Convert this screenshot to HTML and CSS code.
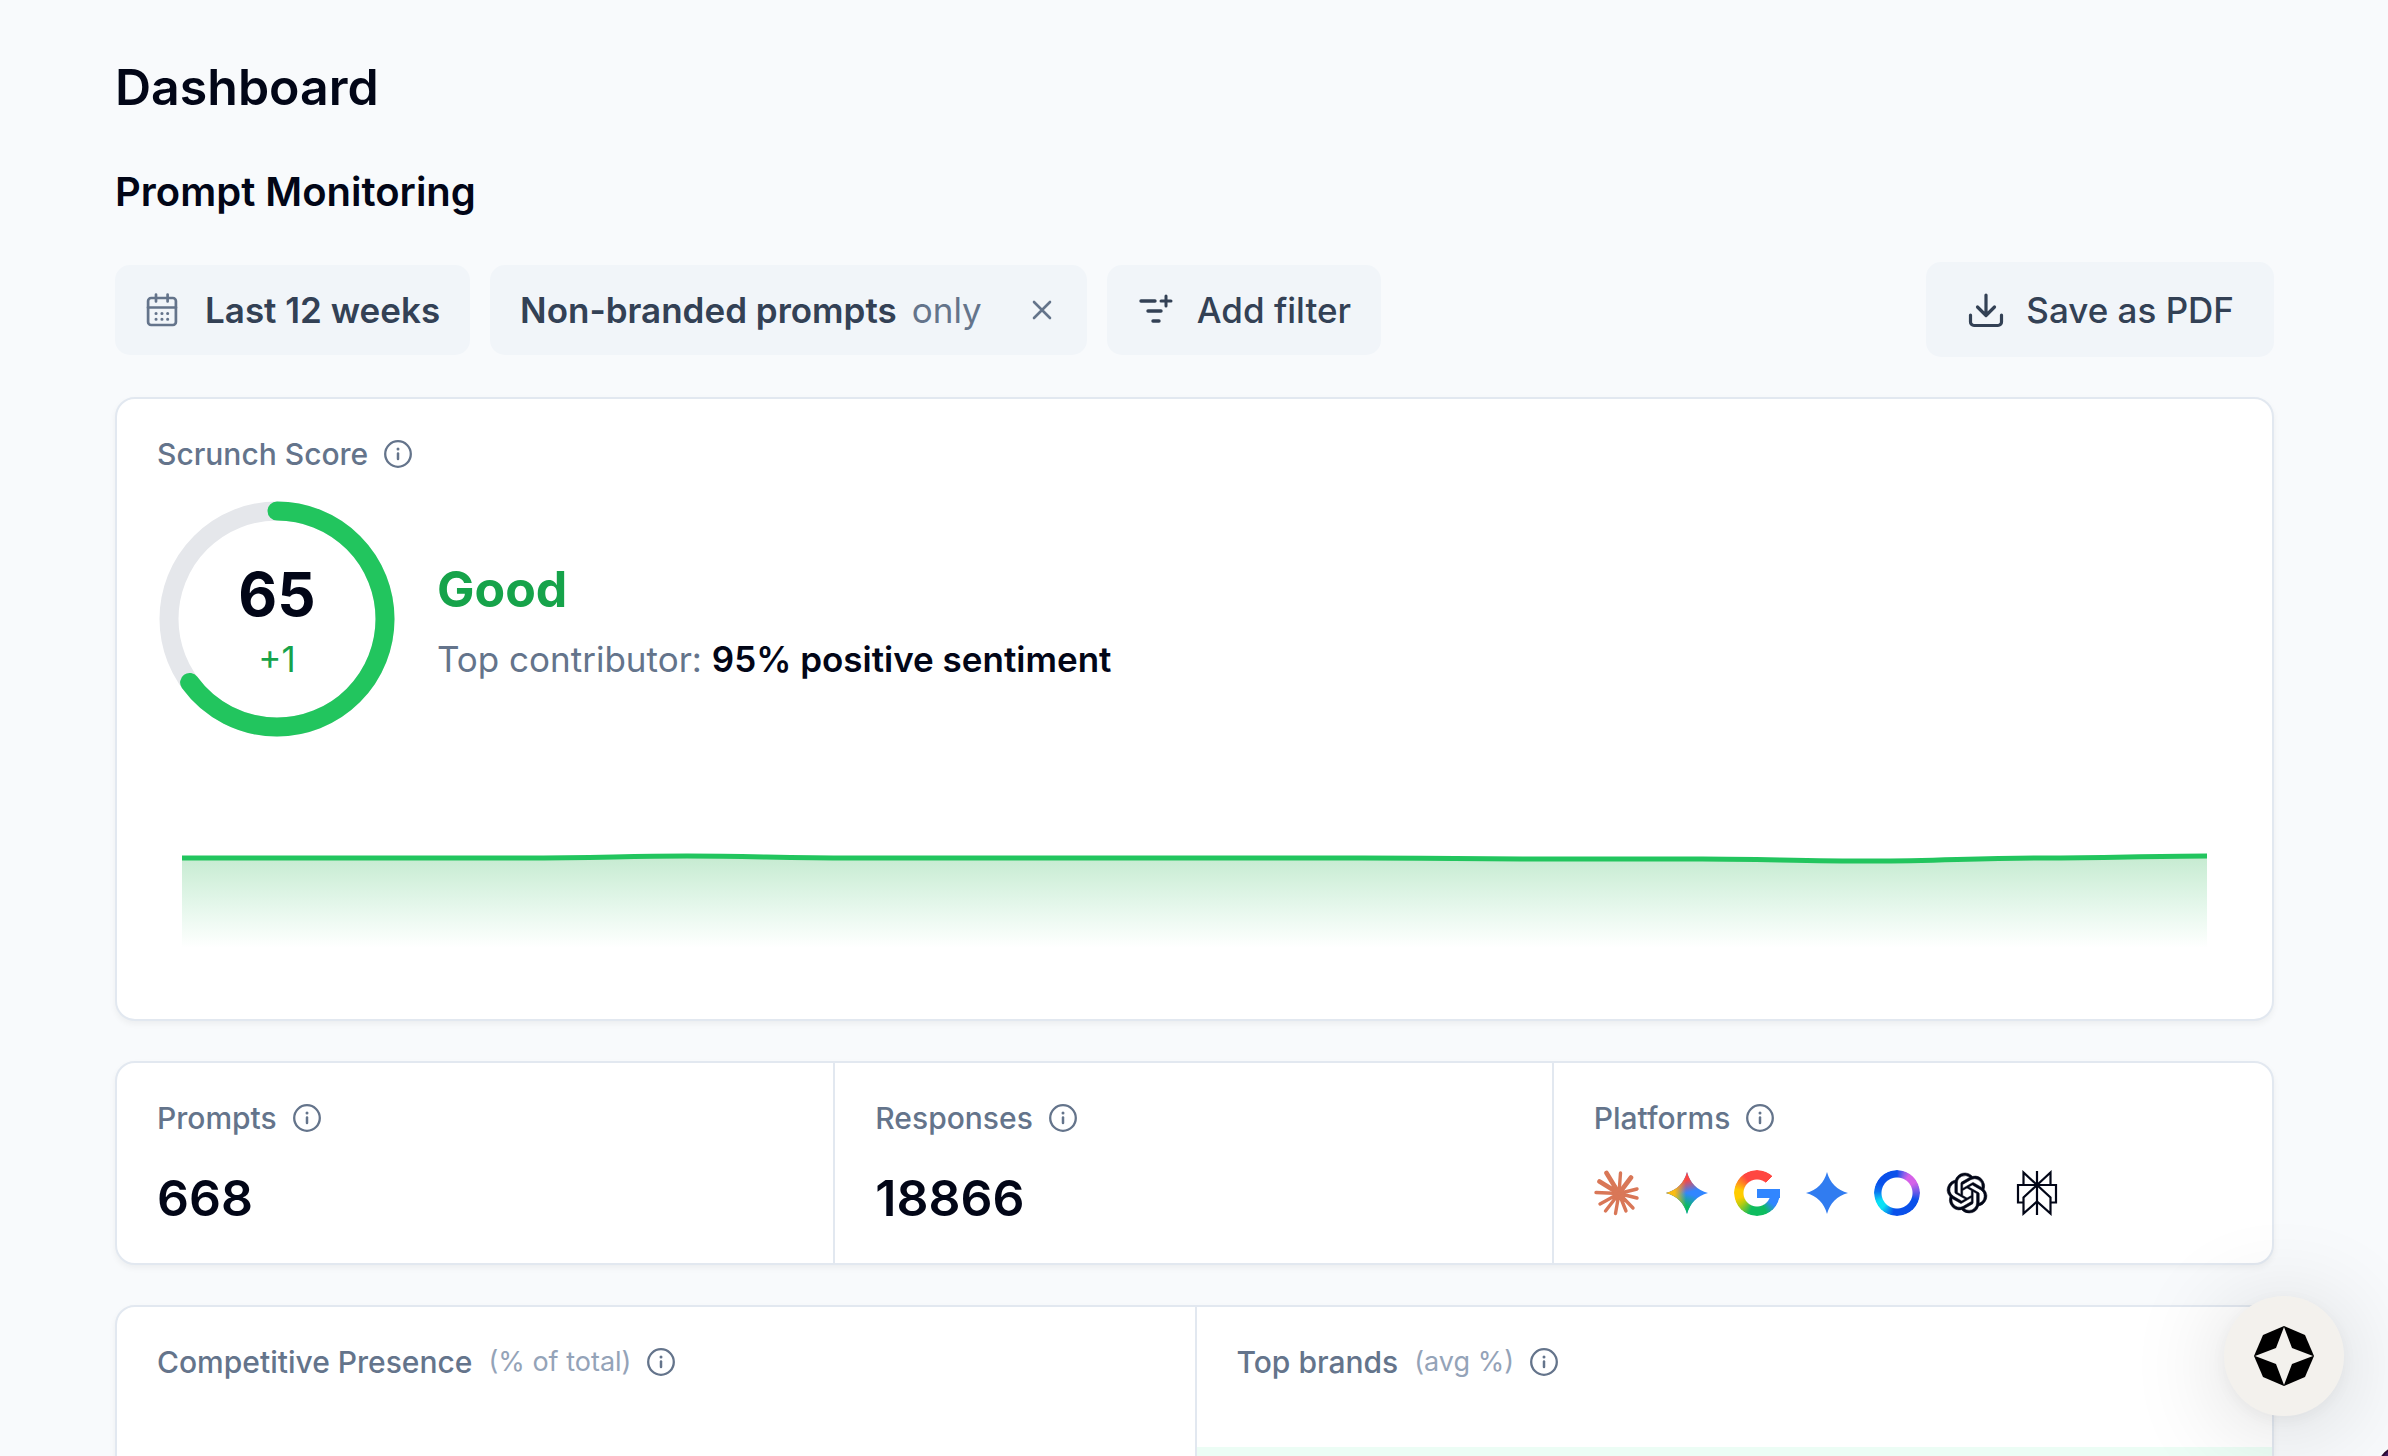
FILE: index.html
```html
<!DOCTYPE html>
<html lang="en">
<head>
<meta charset="UTF-8">
<meta name="viewport" content="width=device-width, initial-scale=1.0">
<title>Dashboard</title>
<link rel="stylesheet" href="styles.css">
</head>
<body>
  <!-- shared icons -->
  <svg class="defs" aria-hidden="true">
    <symbol id="info" viewBox="0 0 28 28">
      <circle cx="14" cy="14" r="12.8" fill="none" stroke="currentColor" stroke-width="2.3"/>
      <circle cx="14" cy="9" r="1.5" fill="currentColor"/>
      <path d="M14 13.6v5.4" stroke="currentColor" stroke-width="2.5" stroke-linecap="round"/>
    </symbol>
    <symbol id="spark" viewBox="0 0 46 46">
      <path d="M23 2C26 13 33 20 44 23C33 26 26 33 23 44C20 33 13 26 2 23C13 20 20 13 23 2Z"/>
    </symbol>
  </svg>

  <main class="page">
    <h1>Dashboard</h1>
    <h2>Prompt Monitoring</h2>

    <div class="toolbar">
      <button type="button" class="chip chip-date">
        <svg class="icon-calendar" viewBox="0 0 34 34" fill="none" stroke="currentColor" stroke-width="2.7" stroke-linecap="round">
          <rect x="3.1" y="5" width="27.8" height="27" rx="3"/>
          <path d="M3 14.5h28M11 1.5v7M22.6 1.5v7"/>
          <path d="M11 20.5h.1M16.9 20.5h.1M22.6 20.5h.1M11 26.2h.1M16.9 26.2h.1M22.6 26.2h.1" stroke-width="3"/>
        </svg>
        <span class="strong">Last 12 weeks</span>
      </button>
      <div class="chip">
        <span class="strong">Non-branded prompts</span>
        <span class="only">only</span>
        <button type="button" class="remove" aria-label="Remove filter">
          <svg viewBox="0 0 20 20" fill="none" stroke="currentColor" stroke-width="2.6" stroke-linecap="round"><path d="M2 2l16 16M18 2L2 18"/></svg>
        </button>
      </div>
      <button type="button" class="chip chip-add">
        <svg class="icon-filter" viewBox="0 0 36 32" fill="none" stroke="currentColor" stroke-width="3.4" stroke-linecap="round">
          <path d="M4 7h14M11 17h13M16 27h6"/>
          <path d="M24 7h10M29 2v10" stroke-width="3"/>
        </svg>
        <span>Add filter</span>
      </button>
      <button type="button" class="save">
        <svg class="icon-save" viewBox="0 0 36 36" fill="none" stroke="currentColor" stroke-width="3.2" stroke-linecap="round" stroke-linejoin="round">
          <path d="M20 3v20M11.5 15l8.5 8.5 8.500-8.500M4.500 23v7a3.500 3.500 0 0 0 3.500 3.500h24a3.500 3.500 0 0 0 3.500-3.500V23"/>
        </svg>
        <span>Save as PDF</span>
      </button>
    </div>

    <section class="card score">
      <h3 class="label">Scrunch Score <svg class="info"><use href="#info"/></svg></h3>
      <div class="score-row">
        <div class="gauge">
          <svg viewBox="0 0 236 236" fill="none" stroke-width="19">
            <circle cx="118" cy="118" r="108" stroke="#e5e7eb"/>
            <circle cx="118" cy="118" r="108" stroke="#22c55e" stroke-linecap="round" pathLength="100" stroke-dasharray="65 100" transform="rotate(-90 118 118)"/>
          </svg>
          <div class="gauge-text">
            <strong>65</strong>
            <span>+1</span>
          </div>
        </div>
        <div class="verdict">
          <p class="rating">Good</p>
          <p class="contributor">Top contributor: <b>95% positive sentiment</b></p>
        </div>
      </div>
      <svg class="trend" viewBox="0 0 2025 100" preserveAspectRatio="none">
        <defs>
          <linearGradient id="fade" x1="0" y1="0" x2="0" y2="1">
            <stop offset="0" stop-color="#22b04c" stop-opacity=".26"/>
            <stop offset="1" stop-color="#22c55e" stop-opacity="0"/>
          </linearGradient>
        </defs>
        <path fill="url(#fade)" d="M0 8H340C420 8 440 6 505 6S600 8 670 8H1180C1240 8 1260 10 1340 10H1520C1580 10 1620 11 1690 11S1790 8 1860 8S1960 6 2025 6V98H0Z"/>
        <path fill="none" stroke="#22c55e" stroke-width="5" d="M0 8H340C420 8 440 6 505 6S600 8 670 8H1180C1240 8 1260 9 1340 9H1520C1580 9 1620 11 1690 11S1790 8 1860 8S1960 6 2025 6"/>
      </svg>
    </section>

    <section class="card stats">
      <div class="cell">
        <h3 class="label">Prompts <svg class="info"><use href="#info"/></svg></h3>
        <p class="value">668</p>
      </div>
      <div class="cell">
        <h3 class="label">Responses <svg class="info"><use href="#info"/></svg></h3>
        <p class="value">18866</p>
      </div>
      <div class="cell">
        <h3 class="label">Platforms <svg class="info"><use href="#info"/></svg></h3>
        <div class="platforms">
          <svg viewBox="0 0 46 46" role="img" aria-label="Claude" fill="none" stroke="#d97757" stroke-width="3.4" stroke-linecap="round">
            <path d="M25 23.5L26.5 3M25 23.5L43 19M25 23.5L43 28M25 23.5L39 38M25 23.5L32 41M25 23.5L21.5 43.500M25 23.500L11.500 41M25 23.500L6 34M25 23.500L2 22.500"/>
            <path d="M25 23.500L12.500 3M25 23.500L37 7.500M25 23.500L5.500 11.500" stroke-width="4.600"/>
            <circle cx="25" cy="23.500" r="4" fill="#d97757"/>
          </svg>
          <svg viewBox="0 0 46 46" role="img" aria-label="Gemini">
            <defs>
              <linearGradient id="gem-red" x1="20" y1="2" x2="26" y2="22" gradientUnits="userSpaceOnUse"><stop offset=".4" stop-color="#f94543"/><stop offset="1" stop-color="#f94543" stop-opacity="0"/></linearGradient>
              <linearGradient id="gem-yellow" x1="3" y1="23" x2="22" y2="23" gradientUnits="userSpaceOnUse"><stop offset=".4" stop-color="#fabc12"/><stop offset="1" stop-color="#fabc12" stop-opacity="0"/></linearGradient>
              <linearGradient id="gem-green" x1="19" y1="44" x2="26" y2="24" gradientUnits="userSpaceOnUse"><stop offset=".4" stop-color="#08b962"/><stop offset="1" stop-color="#08b962" stop-opacity="0"/></linearGradient>
            </defs>
            <use href="#spark" fill="#3186ff"/>
            <use href="#spark" fill="url(#gem-green)"/>
            <use href="#spark" fill="url(#gem-red)"/>
            <use href="#spark" fill="url(#gem-yellow)"/>
          </svg>
          <div class="google" role="img" aria-label="Google"></div>
          <svg viewBox="0 0 46 46" role="img" aria-label="Gemini"><use href="#spark" fill="#317cf0"/></svg>
          <div class="meta" role="img" aria-label="Meta AI"></div>
          <svg viewBox="-1.8 -1.8 27.6 27.6" role="img" aria-label="ChatGPT"><path fill="#020617" stroke="#020617" stroke-width=".3" d="M22.282 9.821a5.985 5.985 0 0 0-.516-4.910 6.046 6.046 0 0 0-6.510-2.900A6.065 6.065 0 0 0 4.981 4.182a5.985 5.985 0 0 0-3.998 2.900 6.046 6.046 0 0 0 .743 7.097 5.980 5.980 0 0 0 .510 4.911 6.051 6.051 0 0 0 6.515 2.900A5.985 5.985 0 0 0 13.260 24a6.056 6.056 0 0 0 5.772-4.206 5.990 5.990 0 0 0 3.997-2.900 6.056 6.056 0 0 0-.747-7.073zM13.260 22.430a4.476 4.476 0 0 1-2.876-1.040l.141-.081 4.779-2.758a.795.795 0 0 0 .392-.681v-6.737l2.020 1.168a.071.071 0 0 1 .038.052v5.583a4.504 4.504 0 0 1-4.494 4.494zM3.600 18.304a4.470 4.470 0 0 1-.535-3.014l.142.085 4.783 2.759a.771.771 0 0 0 .780 0l5.843-3.369v2.332a.080.080 0 0 1-.033.062L9.740 19.950a4.500 4.500 0 0 1-6.140-1.646zM2.340 7.896a4.485 4.485 0 0 1 2.366-1.973V11.600a.766.766 0 0 0 .388.676l5.815 3.355-2.020 1.168a.076.076 0 0 1-.071 0l-4.830-2.786A4.504 4.504 0 0 1 2.340 7.872zm16.597 3.855l-5.833-3.387L15.119 7.200a.076.076 0 0 1 .071 0l4.830 2.791a4.494 4.494 0 0 1-.676 8.105v-5.678a.790.790 0 0 0-.407-.667zm2.010-3.023l-.141-.085-4.774-2.782a.776.776 0 0 0-.785 0L9.409 9.230V6.897a.066.066 0 0 1 .028-.061l4.830-2.787a4.500 4.500 0 0 1 6.680 4.660zm-12.640 4.135l-2.020-1.164a.080.080 0 0 1-.038-.057V6.075a4.500 4.500 0 0 1 7.375-3.453l-.142.080L8.704 5.460a.795.795 0 0 0-.393.681zm1.097-2.365l2.602-1.500 2.607 1.500v2.999l-2.597 1.500-2.607-1.500z"/></svg>
          <svg viewBox="0 0 46 46" role="img" aria-label="Perplexity" fill="none" stroke="#020617" stroke-width="2.2"><path d="M23 1V45M9.500 15V2.500L23 15 36.500 2.500V15M9.500 32.500H4V15H42V32.500H36.500M23 15L9.500 27.500V43.500L23 31.500 36.500 43.500V27.500Z"/></svg>
        </div>
      </div>
    </section>

    <section class="card split">
      <div class="cell">
        <h3 class="label">Competitive Presence <small>(% of total)</small> <svg class="info"><use href="#info"/></svg></h3>
      </div>
      <div class="cell">
        <h3 class="label">Top brands <small>(avg %)</small> <svg class="info"><use href="#info"/></svg></h3>
        <div class="brand-row"></div>
      </div>
    </section>
  </main>

  <button type="button" class="assistant" aria-label="Open assistant">
    <svg viewBox="0 0 60 60"><path d="M30 0L51 9 60 30 51 51 30 60 9 51 0 30 9 9Z"/><path fill="#f3f1ed" d="M30 1L38 22 59 30 38 38 30 59 22 38 1 30 22 22Z"/></svg>
  </button>
  <div class="corner"></div>
</body>
</html>
```
FILE: styles.css
```css
* { box-sizing: border-box; }
body { margin: 0; height: 100vh; overflow: hidden; background: #f8fafc; color: #020617; font-family: Inter, sans-serif; font-size: 35px; font-optical-sizing: none; }
h1, h2, h3, p { margin: 0; }
button { font: inherit; color: inherit; border: 0; background: none; padding: 0; cursor: pointer; }
.defs { display: none; }
.page { padding: 55px 114px 0 115px; }
h1 { font-size: 50px; font-weight: 600; line-height: 64px; }
h2 { margin-top: 45px; font-size: 40px; font-weight: 600; line-height: 56px; }

.toolbar { display: flex; align-items: center; gap: 20px; margin-top: 42px; color: #334155; font-weight: 500; }
.chip { display: flex; align-items: center; height: 90px; padding: 0 30px; border-radius: 15px; background: #f1f5f9; }
.chip .strong { font-weight: 600; }
.icon-calendar { width: 34px; height: 34px; margin-right: 26px; color: #64748b; }
.only { margin-left: 15px; color: #64748b; font-weight: 400; }
.remove { display: flex; margin: 0 5px 0 50px; color: #64748b; }
.remove svg { width: 20px; height: 20px; }
.icon-filter { width: 36px; height: 32px; margin-right: 24px; }
.save { display: flex; align-items: center; gap: 24px; height: 95px; margin-left: auto; padding: 0 40px; border-radius: 15px; background: #f1f5f9; }
.icon-save { width: 36px; height: 36px; overflow: visible; }

.card { margin-top: 40px; border: 2px solid #e2e8f0; border-radius: 20px; background: #fff; box-shadow: 0 3px 6px rgba(0, 0, 0, .05); }
.label { display: flex; align-items: center; color: #64748b; font-size: 30px; font-weight: 500; line-height: 40px; }
.label small { margin-left: 16px; color: #94a3b8; font-size: 27px; font-weight: 400; }
.info { width: 28px; height: 28px; margin-left: 16px; }
.score { height: 624px; padding: 35px 40px; }
.score-row { display: flex; align-items: center; gap: 42px; margin-top: 27px; padding-left: 2px; }
.gauge { display: grid; width: 236px; height: 236px; }
.gauge > * { grid-area: 1 / 1; }
.gauge-text { display: flex; flex-direction: column; align-items: center; justify-content: center; padding-top: 10px; }
.gauge-text strong { font-size: 60px; font-weight: 700; line-height: 70px; }
.gauge-text span { color: #16a34a; line-height: 60px; }
.verdict { padding-top: 10px; }
.rating { color: #16a34a; font-size: 50px; font-weight: 700; line-height: 70px; }
.contributor { color: #64748b; line-height: 70px; }
.contributor b { color: #020617; font-weight: 600; }
.trend { display: block; width: calc(100% - 50px); height: 100px; margin: 113px 25px 0; }

.cell { padding: 35px 40px; }
.stats { display: grid; grid-template-columns: repeat(3, 1fr); }
.stats .cell { padding-bottom: 30px; border-right: 2px solid #e2e8f0; }
.stats .cell:last-child { border-right: 0; }
.value { margin-top: 25px; font-size: 50px; font-weight: 600; line-height: 70px; }
.platforms { display: flex; gap: 24px; margin-top: 32px; }
.platforms > * { width: 46px; height: 46px; }

/* ring plus crossbar */
.google { display: grid; align-items: center; justify-items: end; }
.google::before, .google::after { content: ""; grid-area: 1 / 1; }
.google::before { width: 46px; height: 46px; border-radius: 50%; background: conic-gradient(#ff4641 42deg, transparent 42deg 88deg, #3186ff 88deg 125deg, #0ebc5f 155deg 200deg, #b8cc10 235deg, #ffcc00 255deg 280deg, #ff4641 325deg); -webkit-mask: radial-gradient(circle, transparent 13px, #000 14px); mask: radial-gradient(circle, transparent 13px, #000 14px); }
.google::after { width: 23px; height: 9px; background: #3186ff; }
.meta { border-radius: 50%; background: conic-gradient(#0a50ea, #8a60ea 20deg, #d561e8 35deg 60deg, #6058e8 90deg, #0a50ea 110deg 190deg, #0ae0f5 225deg 245deg, #0a70f0 275deg, #0a50ea 300deg); -webkit-mask: radial-gradient(circle, transparent 15px, #000 16px); mask: radial-gradient(circle, transparent 15px, #000 16px); }

.split { display: grid; grid-template-columns: repeat(2, 1fr); min-height: 600px; overflow: hidden; }
.split .cell + .cell { border-left: 2px solid #e2e8f0; }
.brand-row { height: 90px; margin: 65px -40px 0; background: #ecfdf5; }

.assistant { position: fixed; right: 44px; bottom: 40px; display: flex; align-items: center; justify-content: center; width: 120px; height: 120px; border-radius: 50%; background: #f3f1ed; box-shadow: 0 10px 100px rgba(0, 0, 0, .16), 0 4px 20px rgba(0, 0, 0, .05); }
.assistant svg { width: 60px; height: 60px; }
.corner { position: fixed; right: -39px; bottom: -39px; width: 50px; height: 50px; border: 2px solid #2a0a2e; border-radius: 50%; background: #3b1a5c; }
```
